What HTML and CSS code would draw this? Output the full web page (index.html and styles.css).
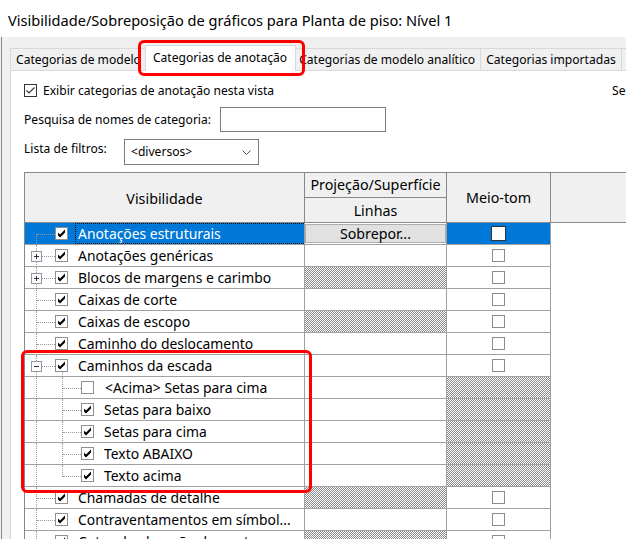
FILE: index.html
```html
<!DOCTYPE html>
<html lang="pt">
<head>
    <meta charset="UTF-8">
    <title>Visibilidade/Sobreposição de gráficos</title>
    <link rel="stylesheet" href="styles.css">
</head>
<body>
    <div class="window">
        <div class="titlebar">Visibilidade/Sobreposição de gráficos para Planta de piso: Nível 1</div>

        <div class="dialog">
            <!-- Tabs -->
            <div class="tabs">
                <div class="tab">Categorias de modelo</div>
                <div class="tab active">Categorias de anotação</div>
                <div class="tab">Categorias de modelo analítico</div>
                <div class="tab">Categorias importadas</div>
                <div class="tab">Filtros</div>
            </div>

            <div class="panel">
                <div class="show-row">
                    <label class="check-label">
                        <svg class="win-check" viewBox="0 0 13 13"><rect x=".5" y=".5" width="12" height="12" fill="#fff" stroke="#333"/><path d="M2.5 6.5 5 9l5.5-5.5" fill="none" stroke="#333" stroke-width="1.1"/></svg>
                        Exibir categorias de anotação nesta vista
                    </label>
                    <span class="hint">Se uma categoria estiver desmarcada, ela não ficará visível.</span>
                </div>

                <div class="field-row search-row">
                    <span class="search-label">Pesquisa de nomes de categoria:</span>
                    <span class="textbox"></span>
                </div>

                <div class="field-row filter-row">
                    <span class="filter-label">Lista de filtros:</span>
                    <span class="select">&lt;diversos&gt;<svg class="chevron" viewBox="0 0 9 5"><path d="M.5.5 4.5 4.5 8.5.5" fill="none" stroke="#555"/></svg></span>
                </div>

                <!-- Categories grid -->
                <div class="grid">
                    <div class="grid-head">
                        <div class="head-cell head-vis">Visibilidade</div>
                        <div class="head-cell head-proj">Projeção/Superfície</div>
                        <div class="head-cell head-lines">Linhas</div>
                        <div class="head-cell head-half">Meio-tom</div>
                        <div class="head-cell head-rest"></div>
                    </div>

                    <div class="grid-body">
                        <div class="row selected">
                            <div class="name">
                                <span class="tree-v from-mid"></span><span class="tree-h"></span>
                                <svg class="cb" viewBox="0 0 13 13"><rect x=".5" y=".5" width="12" height="12" fill="#fff" stroke="#8e8f8f"/><path d="M3 5.5 5 7.5l5-5v3l-5 5-2-2z"/></svg>
                                <span class="focus">Anotações estruturais</span>
                            </div>
                            <div class="proj"><span class="override-btn">Sobrepor...</span></div>
                            <div class="half"><span class="mt-box focus-box"></span></div>
                        </div>

                        <div class="row">
                            <div class="name">
                                <span class="tree-v"></span><span class="tree-h"></span>
                                <svg class="expander" viewBox="0 0 11 11"><rect x=".5" y=".5" width="10" height="10" fill="#fbfbfb" stroke="#8f9aa6"/><path d="M3 5.5h5M5.5 3v5" stroke="#333"/></svg>
                                <svg class="cb" viewBox="0 0 13 13"><rect x=".5" y=".5" width="12" height="12" fill="#fff" stroke="#8e8f8f"/><path d="M3 5.5 5 7.5l5-5v3l-5 5-2-2z"/></svg>
                                <span>Anotações genéricas</span>
                            </div>
                            <div class="proj"></div>
                            <div class="half"><span class="mt-box"></span></div>
                        </div>

                        <div class="row">
                            <div class="name">
                                <span class="tree-v"></span><span class="tree-h"></span>
                                <svg class="expander" viewBox="0 0 11 11"><rect x=".5" y=".5" width="10" height="10" fill="#fbfbfb" stroke="#8f9aa6"/><path d="M3 5.5h5M5.5 3v5" stroke="#333"/></svg>
                                <svg class="cb" viewBox="0 0 13 13"><rect x=".5" y=".5" width="12" height="12" fill="#fff" stroke="#8e8f8f"/><path d="M3 5.5 5 7.5l5-5v3l-5 5-2-2z"/></svg>
                                <span>Blocos de margens e carimbo</span>
                            </div>
                            <div class="proj hatch"></div>
                            <div class="half"><span class="mt-box"></span></div>
                        </div>

                        <div class="row">
                            <div class="name">
                                <span class="tree-v"></span><span class="tree-h"></span>
                                <svg class="cb" viewBox="0 0 13 13"><rect x=".5" y=".5" width="12" height="12" fill="#fff" stroke="#8e8f8f"/><path d="M3 5.5 5 7.5l5-5v3l-5 5-2-2z"/></svg>
                                <span>Caixas de corte</span>
                            </div>
                            <div class="proj"></div>
                            <div class="half"><span class="mt-box"></span></div>
                        </div>

                        <div class="row">
                            <div class="name">
                                <span class="tree-v"></span><span class="tree-h"></span>
                                <svg class="cb" viewBox="0 0 13 13"><rect x=".5" y=".5" width="12" height="12" fill="#fff" stroke="#8e8f8f"/><path d="M3 5.5 5 7.5l5-5v3l-5 5-2-2z"/></svg>
                                <span>Caixas de escopo</span>
                            </div>
                            <div class="proj hatch"></div>
                            <div class="half"><span class="mt-box"></span></div>
                        </div>

                        <div class="row">
                            <div class="name">
                                <span class="tree-v"></span><span class="tree-h"></span>
                                <svg class="cb" viewBox="0 0 13 13"><rect x=".5" y=".5" width="12" height="12" fill="#fff" stroke="#8e8f8f"/><path d="M3 5.5 5 7.5l5-5v3l-5 5-2-2z"/></svg>
                                <span>Caminho do deslocamento</span>
                            </div>
                            <div class="proj"></div>
                            <div class="half"><span class="mt-box"></span></div>
                        </div>

                        <div class="row">
                            <div class="name">
                                <span class="tree-v"></span><span class="tree-h"></span>
                                <span class="tree-v child from-box"></span>
                                <svg class="expander" viewBox="0 0 11 11"><rect x=".5" y=".5" width="10" height="10" fill="#fbfbfb" stroke="#8f9aa6"/><path d="M3 5.5h5" stroke="#333"/></svg>
                                <svg class="cb" viewBox="0 0 13 13"><rect x=".5" y=".5" width="12" height="12" fill="#fff" stroke="#8e8f8f"/><path d="M3 5.5 5 7.5l5-5v3l-5 5-2-2z"/></svg>
                                <span>Caminhos da escada</span>
                            </div>
                            <div class="proj"></div>
                            <div class="half"><span class="mt-box"></span></div>
                        </div>

                        <div class="row">
                            <div class="name child-name">
                                <span class="tree-v"></span>
                                <span class="tree-v child"></span><span class="tree-h child"></span>
                                <svg class="cb" viewBox="0 0 13 13"><rect x=".5" y=".5" width="12" height="12" fill="#fff" stroke="#8e8f8f"/></svg>
                                <span class="pad">&lt;Acima&gt; Setas para cima</span>
                            </div>
                            <div class="proj"></div>
                            <div class="half hatch"></div>
                        </div>

                        <div class="row">
                            <div class="name child-name">
                                <span class="tree-v"></span>
                                <span class="tree-v child"></span><span class="tree-h child"></span>
                                <svg class="cb" viewBox="0 0 13 13"><rect x=".5" y=".5" width="12" height="12" fill="#fff" stroke="#8e8f8f"/><path d="M3 5.5 5 7.5l5-5v3l-5 5-2-2z"/></svg>
                                <span>Setas para baixo</span>
                            </div>
                            <div class="proj"></div>
                            <div class="half hatch"></div>
                        </div>

                        <div class="row">
                            <div class="name child-name">
                                <span class="tree-v"></span>
                                <span class="tree-v child"></span><span class="tree-h child"></span>
                                <svg class="cb" viewBox="0 0 13 13"><rect x=".5" y=".5" width="12" height="12" fill="#fff" stroke="#8e8f8f"/><path d="M3 5.5 5 7.5l5-5v3l-5 5-2-2z"/></svg>
                                <span>Setas para cima</span>
                            </div>
                            <div class="proj"></div>
                            <div class="half hatch"></div>
                        </div>

                        <div class="row">
                            <div class="name child-name">
                                <span class="tree-v"></span>
                                <span class="tree-v child"></span><span class="tree-h child"></span>
                                <svg class="cb" viewBox="0 0 13 13"><rect x=".5" y=".5" width="12" height="12" fill="#fff" stroke="#8e8f8f"/><path d="M3 5.5 5 7.5l5-5v3l-5 5-2-2z"/></svg>
                                <span>Texto ABAIXO</span>
                            </div>
                            <div class="proj"></div>
                            <div class="half hatch"></div>
                        </div>

                        <div class="row">
                            <div class="name child-name">
                                <span class="tree-v"></span>
                                <span class="tree-v child to-mid"></span><span class="tree-h child"></span>
                                <svg class="cb" viewBox="0 0 13 13"><rect x=".5" y=".5" width="12" height="12" fill="#fff" stroke="#8e8f8f"/><path d="M3 5.5 5 7.5l5-5v3l-5 5-2-2z"/></svg>
                                <span>Texto acima</span>
                            </div>
                            <div class="proj"></div>
                            <div class="half hatch"></div>
                        </div>

                        <div class="row">
                            <div class="name">
                                <span class="tree-v"></span><span class="tree-h"></span>
                                <svg class="cb" viewBox="0 0 13 13"><rect x=".5" y=".5" width="12" height="12" fill="#fff" stroke="#8e8f8f"/><path d="M3 5.5 5 7.5l5-5v3l-5 5-2-2z"/></svg>
                                <span>Chamadas de detalhe</span>
                            </div>
                            <div class="proj hatch"></div>
                            <div class="half"><span class="mt-box"></span></div>
                        </div>

                        <div class="row">
                            <div class="name">
                                <span class="tree-v"></span><span class="tree-h"></span>
                                <svg class="cb" viewBox="0 0 13 13"><rect x=".5" y=".5" width="12" height="12" fill="#fff" stroke="#8e8f8f"/><path d="M3 5.5 5 7.5l5-5v3l-5 5-2-2z"/></svg>
                                <span>Contraventamentos em símbol...</span>
                            </div>
                            <div class="proj"></div>
                            <div class="half"><span class="mt-box"></span></div>
                        </div>

                        <div class="row">
                            <div class="name">
                                <span class="tree-v"></span><span class="tree-h"></span>
                                <svg class="cb" viewBox="0 0 13 13"><rect x=".5" y=".5" width="12" height="12" fill="#fff" stroke="#8e8f8f"/><path d="M3 5.5 5 7.5l5-5v3l-5 5-2-2z"/></svg>
                                <span>Cotas de elevação de ponto</span>
                            </div>
                            <div class="proj hatch"></div>
                            <div class="half"><span class="mt-box"></span></div>
                        </div>
                    </div>
                </div>
            </div>
        </div>

        <!-- Red highlight marks -->
        <div class="callout callout-tab"></div>
        <div class="callout callout-rows"></div>
    </div>
</body>
</html>
```
FILE: styles.css
```css
* {
    box-sizing: border-box;
}

body {
    margin: 0;
    font-family: "Noto Sans", sans-serif;
    color: #000;
    background: #f0f0f0;
}

.window {
    position: relative;
    width: 626px;
    height: 539px;
    overflow: hidden;
    background: #f0f0f0;
}

.titlebar {
    height: 37px;
    padding: 3px 0 0 8px;
    line-height: 34px;
    font-size: 14.6px;
    background: #fff;
    white-space: nowrap;
}

.dialog {
    height: 502px;
    margin-left: 1px;
    padding: 8px 0 0 8px;
    border-left: 1px solid #8a8a8a;
}

/* Tabs */
.tabs {
    display: flex;
    align-items: flex-end;
    height: 25px;
    font-size: 12.1px;
    white-space: nowrap;
}

.tab {
    flex: none;
    height: 22px;
    padding: 0 5px;
    line-height: 21px;
    background: #f0f0f0;
    border: 1px solid #d9d9d9;
    border-bottom: none;
    margin-left: -1px;
}

.tab:first-child {
    margin-left: 0;
}

.tab.active {
    position: relative;
    z-index: 1;
    height: 26px;
    margin: 0 -2px -1px -2px;
    padding: 0 8px 0 7px;
    line-height: 23px;
    background: #fff;
}

.panel {
    width: 700px;
    height: 480px;
    padding: 11px 0 0 13px;
    background: #fff;
    border: 1px solid #d9d9d9;
    font-size: 12.1px;
}

.show-row {
    display: grid;
    grid-template-columns: 588px auto;
    align-items: center;
    height: 14px;
    white-space: nowrap;
}

.check-label {
    display: flex;
    align-items: center;
    gap: 6px;
}

.win-check {
    display: block;
    width: 13px;
    height: 13px;
}

.field-row {
    display: flex;
    white-space: nowrap;
}

.search-row {
    margin-top: 11px;
    height: 25px;
    align-items: center;
}

.search-label {
    width: 196px;
}

.textbox {
    width: 166px;
    height: 25px;
    border: 1px solid #7a7a7a;
    background: #fff;
}

.filter-row {
    margin-top: 7px;
    height: 26px;
    align-items: flex-start;
}

.filter-label {
    width: 100px;
    line-height: 20px;
}

.select {
    display: flex;
    align-items: center;
    justify-content: space-between;
    width: 135px;
    height: 26px;
    padding: 0 7px 1px 6px;
    border: 1px solid #7a7a7a;
}

.chevron {
    width: 9px;
    height: 5px;
    margin-top: 2px;
}

/* Grid */
.grid {
    margin-top: 7px;
    border-left: 1px solid #888;
}

.grid-head {
    display: grid;
    grid-template-columns: 280px 142px 104px 200px;
    grid-template-rows: 25px 25px;
    border-top: 1px solid #888;
    background: #f0f0f0;
    font-size: 14.3px;
}

.head-cell {
    display: flex;
    align-items: center;
    justify-content: center;
    border-right: 1px solid #888;
    border-bottom: 1px solid #888;
    white-space: nowrap;
}

.head-vis {
    grid-row: 1 / 3;
    grid-column: 1;
    padding-top: 1px;
}

.head-proj {
    grid-row: 1;
    grid-column: 2;
    padding-bottom: 2px;
}

.head-lines {
    grid-row: 2;
    grid-column: 2;
}

.head-half {
    grid-row: 1 / 3;
    grid-column: 3;
}

.head-rest {
    grid-row: 1 / 3;
    grid-column: 4;
}

.row {
    display: grid;
    grid-template-columns: 280px 142px 104px;
    width: 526px;
    height: 22px;
    font-size: 13.9px;
}

.row > div {
    border-right: 1px solid #a0a0a0;
    border-bottom: 1px solid #a0a0a0;
    background: #fff;
}

.name {
    position: relative;
    display: flex;
    align-items: center;
    gap: 10px;
    padding-left: 30px;
    white-space: nowrap;
    overflow: hidden;
}

.child-name {
    padding-left: 56px;
}

.name .pad {
    padding-left: 1px;
}

.cb {
    position: relative;
    z-index: 1;
    flex: none;
    display: block;
    width: 13px;
    height: 13px;
}

.tree-v {
    position: absolute;
    top: 0;
    bottom: -1px;
    left: 11px;
    border-left: 1px dotted #9a9a9a;
}

.tree-v.from-mid {
    top: 11px;
}

.tree-v.child {
    left: 37px;
}

.tree-v.from-box {
    top: 17px;
}

.tree-v.to-mid {
    bottom: auto;
    height: 12px;
}

.tree-h {
    position: absolute;
    top: 11px;
    left: 12px;
    width: 18px;
    border-top: 1px dotted #9a9a9a;
}

.tree-h.child {
    left: 38px;
}

.expander {
    position: absolute;
    z-index: 1;
    left: 6px;
    top: 6px;
    width: 11px;
    height: 11px;
}

.hatch {
    background: repeating-conic-gradient(#8c8c8c 0 25%, #fff 0 50%) 0 0 / 2px 2px !important;
}

.proj {
    display: flex;
}

.half {
    display: flex;
    align-items: center;
    justify-content: center;
}

.mt-box {
    width: 13px;
    height: 13px;
    border: 1px solid #8c8c8c;
    background: #fff;
}

/* Selected row */
.row.selected .name,
.row.selected .half {
    background: #0078d7;
    color: #fff;
}

.focus {
    flex: 1;
    align-self: stretch;
    display: flex;
    align-items: center;
    margin-left: -3px;
    padding-left: 2px;
    border: 1px dotted #111;
    border-right: none;
}

.mt-box.focus-box {
    width: 15px;
    height: 15px;
    border-color: #333;
}

.override-btn {
    flex: 1;
    display: flex;
    align-items: center;
    justify-content: center;
    height: 19px;
    margin: 1px 0 0 0;
    background: #e1e1e1;
    border: 1px solid #adadad;
    font-size: 14.2px;
}

/* Red highlight marks */
.callout {
    position: absolute;
    z-index: 5;
    border: 3px solid #ff0000;
    border-radius: 6px;
}

.callout-tab {
    left: 138px;
    top: 40px;
    width: 167px;
    height: 36px;
}

.callout-rows {
    left: 21px;
    top: 350px;
    width: 291px;
    height: 143px;
}
```
